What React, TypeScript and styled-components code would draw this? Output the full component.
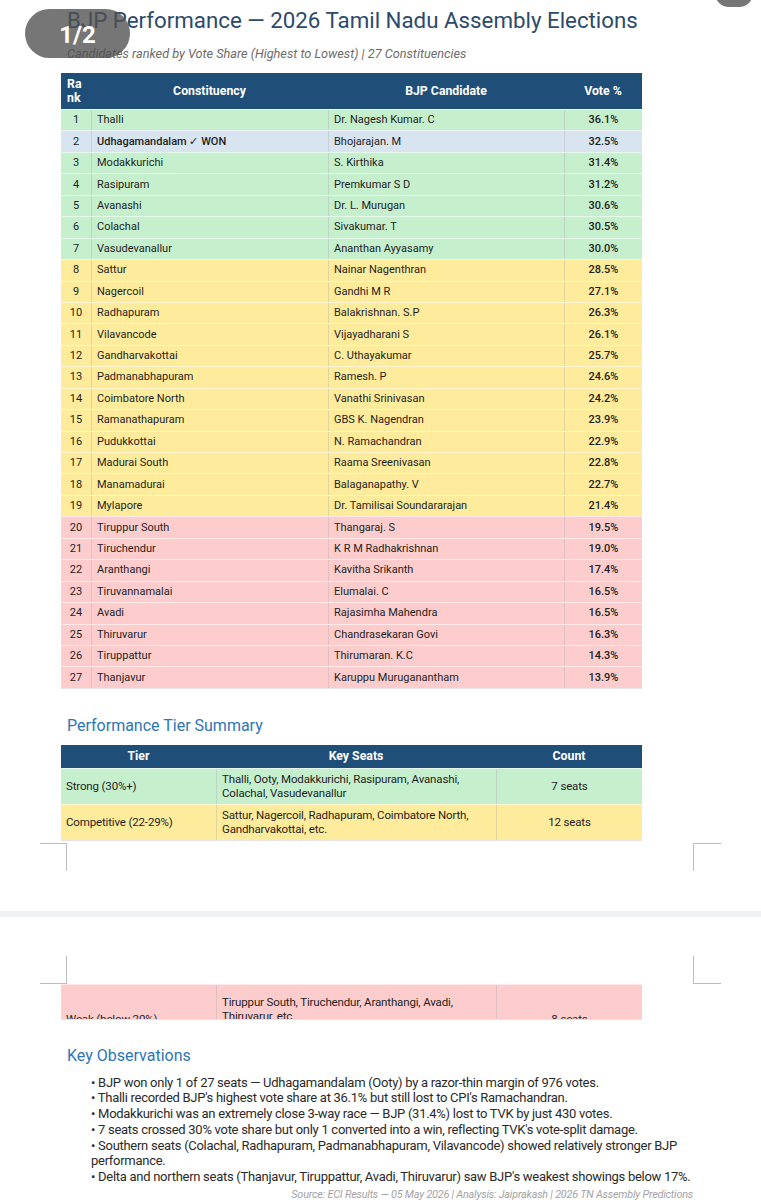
import React from "react";
import styled, { createGlobalStyle } from "styled-components";

const GlobalStyle = createGlobalStyle`
  html, body {
    margin: 0;
    padding: 0;
    background: #ffffff;
  }
  body {
    font-family: Roboto, "Liberation Sans", Arial, sans-serif;
    color: #222;
  }
`;

type Tier = "strong" | "won" | "competitive" | "weak";

const tierBg: Record<Tier, string> = {
  strong: "#c6efce",
  won: "#d8e4ef",
  competitive: "#ffeb9c",
  weak: "#fdcdcd",
};

interface Result {
  rank: number;
  seat: string;
  candidate: string;
  vote: string;
  tier: Tier;
}

const results: Result[] = [
  { rank: 1, seat: "Thalli", candidate: "Dr. Nagesh Kumar. C", vote: "36.1%", tier: "strong" },
  { rank: 2, seat: "Udhagamandalam ✓ WON", candidate: "Bhojarajan. M", vote: "32.5%", tier: "won" },
  { rank: 3, seat: "Modakkurichi", candidate: "S. Kirthika", vote: "31.4%", tier: "strong" },
  { rank: 4, seat: "Rasipuram", candidate: "Premkumar S D", vote: "31.2%", tier: "strong" },
  { rank: 5, seat: "Avanashi", candidate: "Dr. L. Murugan", vote: "30.6%", tier: "strong" },
  { rank: 6, seat: "Colachal", candidate: "Sivakumar. T", vote: "30.5%", tier: "strong" },
  { rank: 7, seat: "Vasudevanallur", candidate: "Ananthan Ayyasamy", vote: "30.0%", tier: "strong" },
  { rank: 8, seat: "Sattur", candidate: "Nainar Nagenthran", vote: "28.5%", tier: "competitive" },
  { rank: 9, seat: "Nagercoil", candidate: "Gandhi M R", vote: "27.1%", tier: "competitive" },
  { rank: 10, seat: "Radhapuram", candidate: "Balakrishnan. S.P", vote: "26.3%", tier: "competitive" },
  { rank: 11, seat: "Vilavancode", candidate: "Vijayadharani S", vote: "26.1%", tier: "competitive" },
  { rank: 12, seat: "Gandharvakottai", candidate: "C. Uthayakumar", vote: "25.7%", tier: "competitive" },
  { rank: 13, seat: "Padmanabhapuram", candidate: "Ramesh. P", vote: "24.6%", tier: "competitive" },
  { rank: 14, seat: "Coimbatore North", candidate: "Vanathi Srinivasan", vote: "24.2%", tier: "competitive" },
  { rank: 15, seat: "Ramanathapuram", candidate: "GBS K. Nagendran", vote: "23.9%", tier: "competitive" },
  { rank: 16, seat: "Pudukkottai", candidate: "N. Ramachandran", vote: "22.9%", tier: "competitive" },
  { rank: 17, seat: "Madurai South", candidate: "Raama Sreenivasan", vote: "22.8%", tier: "competitive" },
  { rank: 18, seat: "Manamadurai", candidate: "Balaganapathy. V", vote: "22.7%", tier: "competitive" },
  { rank: 19, seat: "Mylapore", candidate: "Dr. Tamilisai Soundararajan", vote: "21.4%", tier: "competitive" },
  { rank: 20, seat: "Tiruppur South", candidate: "Thangaraj. S", vote: "19.5%", tier: "weak" },
  { rank: 21, seat: "Tiruchendur", candidate: "K R M Radhakrishnan", vote: "19.0%", tier: "weak" },
  { rank: 22, seat: "Aranthangi", candidate: "Kavitha Srikanth", vote: "17.4%", tier: "weak" },
  { rank: 23, seat: "Tiruvannamalai", candidate: "Elumalai. C", vote: "16.5%", tier: "weak" },
  { rank: 24, seat: "Avadi", candidate: "Rajasimha Mahendra", vote: "16.5%", tier: "weak" },
  { rank: 25, seat: "Thiruvarur", candidate: "Chandrasekaran Govi", vote: "16.3%", tier: "weak" },
  { rank: 26, seat: "Tiruppattur", candidate: "Thirumaran. K.C", vote: "14.3%", tier: "weak" },
  { rank: 27, seat: "Thanjavur", candidate: "Karuppu Muruganantham", vote: "13.9%", tier: "weak" },
];

const tiers: { tier: Tier; name: string; seats: string; count: string }[] = [
  {
    tier: "strong",
    name: "Strong (30%+)",
    seats: "Thalli, Ooty, Modakkurichi, Rasipuram, Avanashi, Colachal, Vasudevanallur",
    count: "7 seats",
  },
  {
    tier: "competitive",
    name: "Competitive (22-29%)",
    seats: "Sattur, Nagercoil, Radhapuram, Coimbatore North, Gandharvakottai, etc.",
    count: "12 seats",
  },
];

const observations = [
  "BJP won only 1 of 27 seats — Udhagamandalam (Ooty) by a razor-thin margin of 976 votes.",
  "Thalli recorded BJP's highest vote share at 36.1% but still lost to CPI's Ramachandran.",
  "Modakkurichi was an extremely close 3-way race — BJP (31.4%) lost to TVK by just 430 votes.",
  "7 seats crossed 30% vote share but only 1 converted into a win, reflecting TVK's vote-split damage.",
  "Southern seats (Colachal, Radhapuram, Padmanabhapuram, Vilavancode) showed relatively stronger BJP performance.",
  "Delta and northern seats (Thanjavur, Tiruppattur, Avadi, Thiruvarur) saw BJP's weakest showings below 17%.",
];

const Viewer = styled.main`
  position: relative;
  width: 761px;
  height: 1200px;
  overflow: hidden;
  background: #fff;
`;

const PageBadge = styled.div`
  position: absolute;
  left: 25px;
  top: 9px;
  width: 105px;
  height: 49px;
  border-radius: 25px;
  background: rgba(80, 80, 80, 0.78);
  color: #fff;
  display: flex;
  align-items: center;
  justify-content: center;
  font-size: 24px;
  font-weight: 700;
  padding-top: 2px;
  box-sizing: border-box;
`;

const CornerButton = styled.div`
  position: absolute;
  right: 8px;
  top: -33px;
  width: 38px;
  height: 40px;
  border-radius: 14px;
  background: rgba(80, 80, 80, 0.78);
`;

const Sheet = styled.section<{ $first?: boolean }>`
  padding: ${(p) => (p.$first ? "6px 40px 40px" : "39px 40px 0")};
`;

const Column = styled.div`
  margin-left: 21px;
  width: 581px;
`;

const Title = styled.h1`
  margin: 0;
  padding-left: 6px;
  font-size: 22.3px;
  line-height: 28px;
  font-weight: 400;
  color: #2c4a6b;
  white-space: nowrap;
`;

const Subtitle = styled.p`
  margin: 12px 0 0;
  padding-left: 6px;
  font-size: 12.7px;
  line-height: 16px;
  font-style: italic;
  color: #6b6b6b;
`;

const SectionHeading = styled.h2<{ $gap: number }>`
  margin: ${(p) => p.$gap}px 0 9px;
  padding-left: 6px;
  font-size: 16px;
  line-height: 20px;
  font-weight: 400;
  color: #2e75b6;
`;

const resultCols = "30px 237px 236px 78px";
const tierCols = "155px 280px 146px";

const Table = styled.div<{ $top: number }>`
  margin-top: ${(p) => p.$top}px;
  border-bottom: 1px solid #e4e4e4;
`;

const HeadRow = styled.div<{ $cols: string; $height: number }>`
  display: grid;
  grid-template-columns: ${(p) => p.$cols};
  height: ${(p) => p.$height}px;
  background: #1f4e79;
  color: #fff;
  font-size: 12.3px;
  font-weight: 700;
`;

const HeadCell = styled.div<{ $left?: boolean }>`
  display: flex;
  align-items: center;
  justify-content: ${(p) => (p.$left ? "flex-start" : "center")};
  padding: 0 6px;
  line-height: 14px;
`;

const Row = styled.div<{ $cols: string; $height: number; $tier: Tier }>`
  display: grid;
  grid-template-columns: ${(p) => p.$cols};
  height: ${(p) => p.$height}px;
  background: ${(p) => tierBg[p.$tier]};
  border-top: 1px solid rgba(255, 255, 255, 0.55);
  box-sizing: border-box;
  overflow: hidden;
`;

const Cell = styled.div<{ $align?: "left" | "center"; $strong?: boolean; $pad?: number }>`
  display: flex;
  align-items: ${(p) => (p.$pad !== undefined ? "flex-start" : "center")};
  justify-content: ${(p) => (p.$align === "center" ? "center" : "flex-start")};
  padding: ${(p) => (p.$pad !== undefined ? `${p.$pad}px 5px 0` : "0 5px")};
  border-left: 1px solid rgba(170, 170, 170, 0.35);
  font-weight: ${(p) => (p.$strong ? 500 : 400)};
  color: #1e1e1e;
  white-space: nowrap;
  &:first-child {
    border-left: none;
  }
`;

const ResultText = styled.div`
  font-size: 11px;
  line-height: 14px;
`;

const TierText = styled.div`
  font-size: 11.5px;
  line-height: 14.5px;
  letter-spacing: -0.15px;
  white-space: normal;
`;

const MarkRow = styled.div<{ $top?: number }>`
  display: flex;
  justify-content: space-between;
  margin-top: ${(p) => p.$top ?? 0}px;
  height: 28px;
`;

const Mark = styled.span<{ $side: "left" | "right"; $edge: "top" | "bottom" }>`
  display: block;
  width: ${(p) => (p.$side === "left" ? 26 : 27)}px;
  height: 27px;
  border: 0 solid #bdbdbd;
  ${(p) => (p.$edge === "top" ? "border-top-width: 1px;" : "border-bottom-width: 1px;")}
  ${(p) => (p.$side === "left" ? "border-right-width: 1px;" : "border-left-width: 1px;")}
`;

const PageGap = styled.div`
  height: 6px;
  background: #f0f2f6;
`;

const ObservationList = styled.div`
  margin-top: 9px;
  padding-left: 51px;
  width: 620px;
`;

const Observation = styled.p`
  margin: 0;
  font-size: 13px;
  line-height: 15.67px;
  letter-spacing: -0.28px;
  color: #2a2a2a;
`;

const Source = styled.p`
  margin: 3px 0 0;
  width: 653px;
  text-align: right;
  font-size: 10.8px;
  line-height: 14px;
  font-style: italic;
  letter-spacing: -0.2px;
  color: #a3a3a3;
  white-space: nowrap;
`;

function CropMarks({ edge, top }: { edge: "top" | "bottom"; top?: number }) {
  return (
    <MarkRow $top={top}>
      <Mark $side="left" $edge={edge} />
      <Mark $side="right" $edge={edge} />
    </MarkRow>
  );
}

export default function App() {
  return (
    <Viewer>
      <GlobalStyle />
      <Sheet $first>
        <Column>
          <Title>BJP Performance — 2026 Tamil Nadu Assembly Elections</Title>
          <Subtitle>
            Candidates ranked by Vote Share (Highest to Lowest) | 27 Constituencies
          </Subtitle>

          <Table $top={11}>
            <HeadRow $cols={resultCols} $height={36}>
              <HeadCell $left>
                Ra
                <br />
                nk
              </HeadCell>
              <HeadCell>Constituency</HeadCell>
              <HeadCell>BJP Candidate</HeadCell>
              <HeadCell>Vote %</HeadCell>
            </HeadRow>
            {results.map((r) => (
              <Row key={`result-${r.rank}`} $cols={resultCols} $height={21.45} $tier={r.tier}>
                <Cell $align="center">
                  <ResultText>{r.rank}</ResultText>
                </Cell>
                <Cell $strong={r.tier === "won"}>
                  <ResultText>{r.seat}</ResultText>
                </Cell>
                <Cell>
                  <ResultText>{r.candidate}</ResultText>
                </Cell>
                <Cell $align="center" $strong>
                  <ResultText>{r.vote}</ResultText>
                </Cell>
              </Row>
            ))}
          </Table>

          <SectionHeading $gap={27}>Performance Tier Summary</SectionHeading>
          <Table $top={0}>
            <HeadRow $cols={tierCols} $height={23}>
              <HeadCell>Tier</HeadCell>
              <HeadCell>Key Seats</HeadCell>
              <HeadCell>Count</HeadCell>
            </HeadRow>
            {tiers.map((t) => (
              <Row key={t.tier} $cols={tierCols} $height={36} $tier={t.tier}>
                <Cell>
                  <TierText>{t.name}</TierText>
                </Cell>
                <Cell>
                  <TierText>{t.seats}</TierText>
                </Cell>
                <Cell $align="center">
                  <TierText>{t.count}</TierText>
                </Cell>
              </Row>
            ))}
          </Table>
        </Column>
        <CropMarks edge="top" top={2} />
      </Sheet>

      <PageGap />

      <Sheet>
        <CropMarks edge="bottom" />
        <Column>
          <Table $top={0}>
            <Row $cols={tierCols} $height={35} $tier="weak">
              <Cell $pad={27}>
                <TierText>Weak (below 20%)</TierText>
              </Cell>
              <Cell $pad={10}>
                <TierText>
                  Tiruppur South, Tiruchendur, Aranthangi, Avadi, Thiruvarur, etc.
                </TierText>
              </Cell>
              <Cell $pad={27} $align="center">
                <TierText>8 seats</TierText>
              </Cell>
            </Row>
          </Table>

          <SectionHeading $gap={26}>Key Observations</SectionHeading>
        </Column>
        <ObservationList>
          {observations.map((o, i) => (
            <Observation key={`obs-${i}`}>• {o}</Observation>
          ))}
        </ObservationList>
        <Source>
          Source: ECI Results — 05 May 2026 | Analysis: Jaiprakash | 2026 TN Assembly
          Predictions
        </Source>
      </Sheet>

      <PageBadge>1/2</PageBadge>
      <CornerButton />
    </Viewer>
  );
}
